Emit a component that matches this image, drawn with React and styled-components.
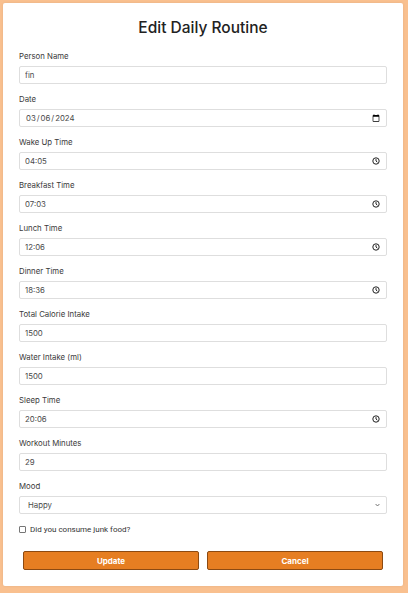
import React from "react";
import styled, { createGlobalStyle } from "styled-components";

const Global = createGlobalStyle`
  html, body { margin: 0; padding: 0; background: #f9c08f; }
  body { font-family: Inter, "Noto Sans", sans-serif; }
  * { box-sizing: border-box; }
`;

const Page = styled.div`
  padding: 3px 5px 7px 3px;
  min-height: 593px;
`;

const Card = styled.form`
  background: #ffffff;
  padding: 16px;
  border-radius: 2px;
  box-shadow: 0 0 3px rgba(0, 0, 0, 0.08);
`;

const Title = styled.h1`
  margin: 0 0 14px;
  font-size: 15.5px;
  line-height: 18px;
  font-weight: 500;
  color: #222;
  text-align: center;
`;

const Field = styled.div`
  display: flex;
  flex-direction: column;
  gap: 5px;
  margin-bottom: 10px;
`;

const Label = styled.label`
  font-size: 7.8px;
  line-height: 10px;
  color: #3a3a3a;
`;

const Box = styled.div`
  display: flex;
  align-items: center;
  height: 18px;
  width: 100%;
  padding: 0 ${(p) => p.$right || 5}px 0 ${(p) => p.$left || 5}px;
  border: 1px solid #dedede;
  border-radius: 2px;
  background: #fff;
`;

const TextInput = styled.input`
  flex: 1;
  min-width: 0;
  height: 100%;
  padding: 0;
  border: none;
  outline: none;
  background: transparent;
  font-family: Inter, "Noto Sans", sans-serif;
  font-size: 7.8px;
  color: #4a4a4a;
  &::-webkit-calendar-picker-indicator {
    width: 8px;
    height: 8px;
    padding: 0;
    margin: 0 1px 0 0;
  }
`;

const SelectEl = styled.select`
  flex: 1;
  min-width: 0;
  height: 100%;
  padding: 0;
  border: none;
  outline: none;
  appearance: none;
  -webkit-appearance: none;
  background: transparent;
  font-family: Inter, "Noto Sans", sans-serif;
  font-size: 7.8px;
  color: #4a4a4a;
`;

const CheckRow = styled.label`
  display: flex;
  align-items: center;
  gap: 4px;
  height: 10px;
  font-size: 8px;
  color: #333;
  font-family: Roboto, sans-serif;
`;

const Check = styled.input`
  appearance: none;
  -webkit-appearance: none;
  width: 7px;
  height: 7px;
  margin: 0;
  border: 1px solid #767676;
  border-radius: 1px;
  background: #fff;
`;

const Buttons = styled.div`
  display: flex;
  gap: 8px;
  padding: 0 4px;
  margin-top: 17px;
`;

const Button = styled.button`
  flex: 1;
  height: 19px;
  background: #e67e22;
  border: 1px solid #8c4a12;
  border-radius: 2px;
  color: #fff;
  font-family: Inter, sans-serif;
  font-weight: 700;
  font-size: 8px;
  padding: 0;
`;

const Clock = () => (
  <svg width="8" height="8" viewBox="0 0 8 8" fill="none" stroke="#222" strokeWidth="1">
    <circle cx="4" cy="4" r="3.2" />
    <path d="M4 2.1 V4 L5.4 5.2" />
  </svg>
);

const Chevron = () => (
  <svg width="5" height="4" viewBox="0 0 5 4" fill="none" stroke="#666" strokeWidth="0.9">
    <path d="M0.6 1 L2.5 3 L4.4 1" />
  </svg>
);

const fields = [
  ["Person Name", "text", "fin"],
  ["Date", "date", "2024-03-06"],
  ["Wake Up Time", "time", "04:05"],
  ["Breakfast Time", "time", "07:03"],
  ["Lunch Time", "time", "12:06"],
  ["Dinner Time", "time", "18:36"],
  ["Total Calorie Intake", "number", "1500"],
  ["Water Intake (ml)", "number", "1500"],
  ["Sleep Time", "time", "20:06"],
  ["Workout Minutes", "number", "29"],
];

export default function App() {
  return (
    <Page>
      <Global />
      <Card onSubmit={(e) => e.preventDefault()}>
        <Title>Edit Daily Routine</Title>
        {fields.map(([label, type, value]) => (
          <Field key={label}>
            <Label>{label}</Label>
            <Box $right={type === "time" ? 6 : 5}>
              <TextInput type={type === "time" ? "text" : type} defaultValue={value} />
              {type === "time" && <Clock />}
            </Box>
          </Field>
        ))}
        <Field>
          <Label>Mood</Label>
          <Box $left={8} $right={6}>
            <SelectEl defaultValue="Happy">
              <option>Happy</option>
              <option>Sad</option>
              <option>Neutral</option>
            </SelectEl>
            <Chevron />
          </Box>
        </Field>
        <CheckRow>
          <Check type="checkbox" />
          Did you consume junk food?
        </CheckRow>
        <Buttons>
          <Button type="submit">Update</Button>
          <Button type="button">Cancel</Button>
        </Buttons>
      </Card>
    </Page>
  );
}
